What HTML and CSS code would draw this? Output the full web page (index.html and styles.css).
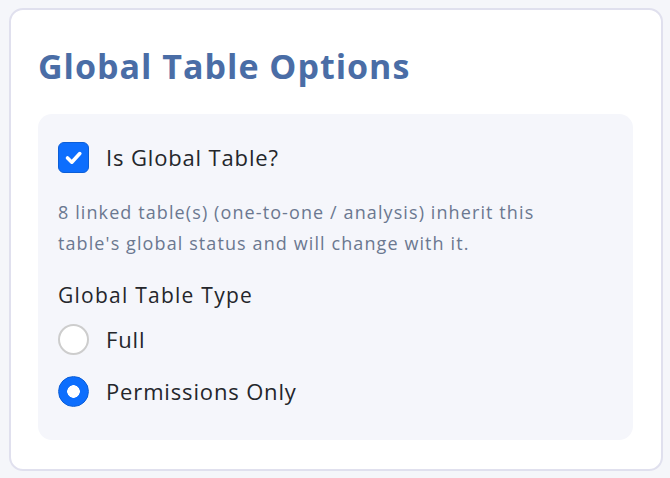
FILE: index.html
```html
<!DOCTYPE html>
<html lang="en">
<head>
  <meta charset="UTF-8" />
  <meta name="viewport" content="width=device-width, initial-scale=1.0"/>
  <title>Global Table Options</title>
  <link rel="stylesheet" href="styles.css">
</head>
<body>
  <div class="card">
    <h2 class="card-title">Global Table Options</h2>

    <div class="options-box">
      <label class="check-row">
        <span class="checkbox checked">
          <svg viewBox="0 0 31 31" width="31" height="31">
            <path d="M9.5 16l4.3 4.2L21.8 11.6" fill="none" stroke="#fff" stroke-width="3.6" stroke-linecap="round" stroke-linejoin="round"/>
          </svg>
        </span>
        <span class="check-label">Is Global Table?</span>
      </label>

      <p class="hint">8 linked table(s) (one-to-one / analysis) inherit this table's global status and will change with it.</p>

      <div class="field-label">Global Table Type</div>

      <div class="radio-group">
        <label class="radio-row">
          <span class="radio"></span>
          <span class="radio-label">Full</span>
        </label>
        <label class="radio-row">
          <span class="radio checked"></span>
          <span class="radio-label">Permissions Only</span>
        </label>
      </div>
    </div>
  </div>
</body>
</html>
```

FILE: styles.css
```css
:root {
  --page-bg: #f5f6fa;
  --box-bg: #f5f6fb;
  --border: #e0e0ee;
  --title: #4a6da6;
  --text: #24262b;
  --muted: #6b7890;
  --primary: #0d6efd;
}

body {
  margin: 0;
  padding: 8px 7px 9px 9px;
  font-family: "Open Sans", "Noto Sans", Arial, sans-serif;
  background-color: var(--page-bg);
  color: var(--text);
}

.card {
  background: #fff;
  border: 2px solid var(--border);
  border-radius: 14px;
  padding: 36px 28px 29px 27px;
}

.card-title {
  margin: 0 0 28px 0;
  font-size: 34px;
  line-height: 40px;
  font-weight: 700;
  letter-spacing: 1px;
  color: var(--title);
}

.options-box {
  background: var(--box-bg);
  border-radius: 14px;
  padding: 28px 20px 33px 20px;
}

.check-row, .radio-row {
  display: flex;
  align-items: center;
  gap: 17px;
  cursor: pointer;
}

.checkbox {
  width: 31px;
  height: 31px;
  box-sizing: border-box;
  border-radius: 6px;
  border: 1px solid #0b5ed7;
  display: flex;
  align-items: center;
  justify-content: center;
}

.checkbox svg {
  flex: none;
}

.checkbox.checked {
  background: var(--primary);
}

.check-label, .radio-label {
  font-size: 22px;
  line-height: 31px;
  letter-spacing: 0.85px;
}

.hint {
  max-width: 510px;
  margin: 24px 0 22px 0;
  font-size: 18px;
  line-height: 31px;
  letter-spacing: 1.1px;
  color: var(--muted);
}

.field-label {
  font-size: 21px;
  line-height: 28px;
  letter-spacing: 1.25px;
  margin-bottom: 15px;
}

.radio-group {
  display: flex;
  flex-direction: column;
  gap: 21px;
}

.radio {
  width: 31px;
  height: 31px;
  box-sizing: border-box;
  border-radius: 50%;
  border: 2px solid #cdcdcd;
  background: #fff;
}

.radio.checked {
  border: 1px solid #0b5ed7;
  background: radial-gradient(circle, #fff 0 6px, var(--primary) 6.5px);
}
```
